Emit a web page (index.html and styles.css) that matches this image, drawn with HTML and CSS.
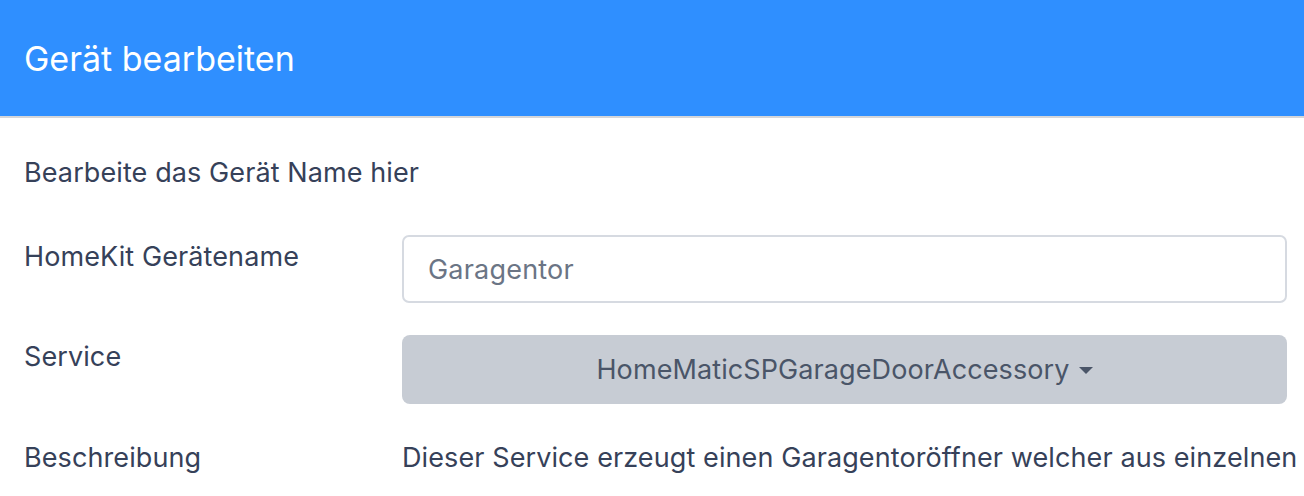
FILE: index.html
```html
<!DOCTYPE html>
<html lang="de">
<head>
<meta charset="utf-8">
<title>Gerät bearbeiten</title>
<link rel="stylesheet" href="styles.css">
</head>
<body>
<div class="modal">
  <header class="modal-header">
    <h1 class="modal-title">Gerät bearbeiten</h1>
  </header>
  <div class="modal-body">
    <p class="intro">Bearbeite das Gerät Name hier</p>
    <div class="form-row">
      <label class="form-label" for="name">HomeKit Gerätename</label>
      <div class="form-field">
        <input class="text-input" id="name" type="text" placeholder="Garagentor">
      </div>
    </div>
    <div class="form-row">
      <span class="form-label">Service</span>
      <div class="form-field">
        <button class="select-btn" type="button">HomeMaticSPGarageDoorAccessory<span class="caret"></span></button>
      </div>
    </div>
    <div class="form-row">
      <span class="form-label">Beschreibung</span>
      <div class="form-field">
        <p class="desc">Dieser Service erzeugt einen Garagentoröffner welcher aus einzelnen</p>
      </div>
    </div>
  </div>
</div>
</body>
</html>
```

FILE: styles.css
```css
html, body {
  margin: 0;
  padding: 0;
  background: #ffffff;
}
body {
  font-family: "Inter", "Noto Sans", sans-serif;
  color: #364159;
  overflow: hidden;
}
.modal {
  width: 1304px;
}
.modal-header {
  height: 116px;
  background: #2f8fff;
  border-bottom: 2px solid #d4d6da;
  display: flex;
  align-items: center;
  padding: 0 24px;
  box-sizing: content-box;
}
.modal-title {
  margin: 0;
  font-size: 34px;
  font-weight: 400;
  color: #ffffff;
  line-height: 40px;
  position: relative;
  top: 1px;
}
.modal-body {
  padding: 37px 0 0 24px;
  letter-spacing: 0.1px;
}
.intro {
  margin: 0 0 44px;
  font-size: 27px;
  line-height: 36px;
}
.form-row {
  display: flex;
  margin-bottom: 32px;
  padding-right: 17px;
}
.form-label {
  width: 378px;
  flex: none;
  padding-top: 4px;
  font-size: 27px;
  line-height: 36px;
}
.form-field {
  flex: 1;
  min-width: 0;
}
.text-input {
  display: block;
  width: 100%;
  box-sizing: border-box;
  height: 68px;
  border: 2px solid #d6dae1;
  border-radius: 7px;
  padding: 0 24px;
  font-family: inherit;
  font-size: 27px;
  letter-spacing: 0.2px;
  color: #364159;
  background: #fff;
  outline: none;
}
.text-input::placeholder {
  color: #6b7585;
}
.select-btn {
  width: 100%;
  height: 69px;
  border: none;
  border-radius: 8px;
  background: #c7ccd4;
  font-family: inherit;
  font-size: 27px;
  letter-spacing: 0.1px;
  color: #4a5568;
  display: flex;
  align-items: center;
  justify-content: center;
  gap: 9px;
  padding: 0;
}
.caret {
  width: 0;
  height: 0;
  border-left: 7px solid transparent;
  border-right: 7px solid transparent;
  border-top: 7px solid #4a5568;
  margin-top: 1px;
}
.desc {
  margin: 0;
  padding-top: 4px;
  font-size: 27px;
  line-height: 36px;
  white-space: nowrap;
}
```
